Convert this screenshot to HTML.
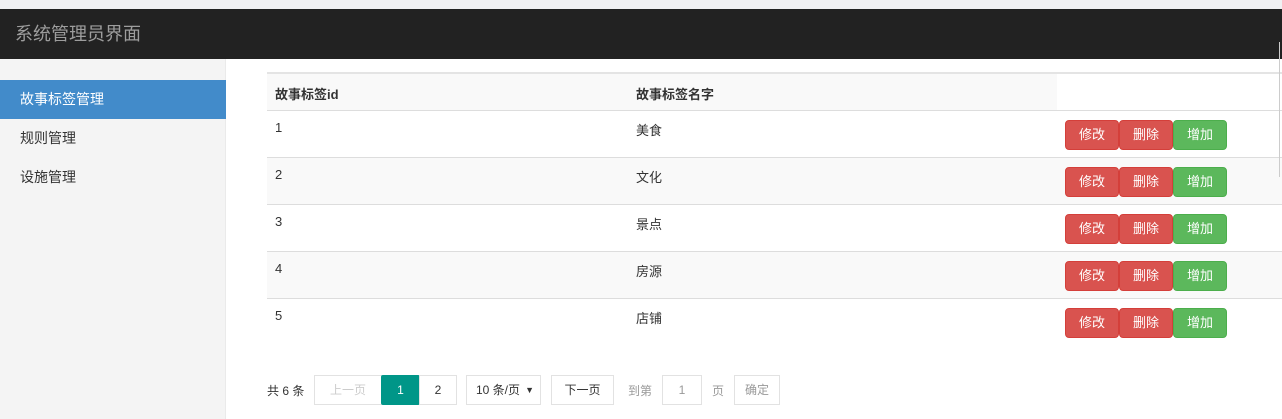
<!DOCTYPE html><html><head><meta charset="utf-8"><style>
*{box-sizing:border-box;margin:0;padding:0}
body{width:1282px;height:419px;overflow:hidden;background:#fff;font-family:"Liberation Sans","Noto Sans CJK SC",sans-serif;font-size:13px;color:#333;position:relative}
.top{position:absolute;left:0;top:0;width:1282px;height:9px;background:#f0f1f3}
.hdr{position:absolute;left:0;top:9px;width:1282px;height:50px;background:#222;color:#9d9d9d;font-size:18px;line-height:50px;padding-left:15px}
.side{position:absolute;left:0;top:59px;width:226px;height:360px;background:#f4f4f4;border-right:1px solid #eaeaea}
.side div{position:absolute;left:0;width:226px;height:39px;line-height:39px;padding-left:20px;font-size:14px;color:#333}
.side .a{background:#428bca;color:#fff}
.tbl{position:absolute;left:267px;top:72px;width:1015px}
.row{position:relative;height:47px;border-top:1px solid #ddd}
.row.s{background:#f9f9f9}
.row span{position:absolute;top:9px}
.c1{left:8px}.c2{left:369px}
.hd{height:38px;border-top:2px solid #e4e4e4;background:linear-gradient(90deg,#f9f9f9 790px,#fff 790px);font-weight:bold}
.hd span{top:10px}
.b{position:absolute;top:9px;width:54px;height:30px;border-radius:4px;color:#fff;font-size:13px;text-align:center;line-height:28px;border:1px solid #d43f3a;background:#d9534f}
.g{background:#5cb85c;border-color:#4cae4c}
.pg{position:absolute;top:375px;height:30px;border:1px solid #e2e2e2;line-height:28px;text-align:center;font-size:12px;background:#fff}
</style></head><body>
<div class="top"></div>
<div class="hdr">系统管理员界面</div>
<div class="side"><div class="a" style="top:21px">故事标签管理</div><div style="top:60px">规则管理</div><div style="top:99px">设施管理</div></div>
<div class="tbl">
<div class="row hd"><span class="c1">故事标签id</span><span class="c2">故事标签名字</span></div>
<div class="row"><span class="c1">1</span><span class="c2">美食</span><div class="b" style="left:798px">修改</div><div class="b" style="left:852px">删除</div><div class="b g" style="left:906px">增加</div></div>
<div class="row s"><span class="c1">2</span><span class="c2">文化</span><div class="b" style="left:798px">修改</div><div class="b" style="left:852px">删除</div><div class="b g" style="left:906px">增加</div></div>
<div class="row"><span class="c1">3</span><span class="c2">景点</span><div class="b" style="left:798px">修改</div><div class="b" style="left:852px">删除</div><div class="b g" style="left:906px">增加</div></div>
<div class="row s"><span class="c1">4</span><span class="c2">房源</span><div class="b" style="left:798px">修改</div><div class="b" style="left:852px">删除</div><div class="b g" style="left:906px">增加</div></div>
<div class="row"><span class="c1">5</span><span class="c2">店铺</span><div class="b" style="left:798px">修改</div><div class="b" style="left:852px">删除</div><div class="b g" style="left:906px">增加</div></div>
</div>
<div style="position:absolute;left:267px;top:382px;font-size:12px">共 6 条</div>
<div class="pg" style="left:314px;width:68px;color:#ccc">上一页</div>
<div class="pg" style="left:381px;width:39px;background:#009688;border-color:#009688;color:#fff;border-radius:2px">1</div>
<div class="pg" style="left:419px;width:38px">2</div>
<div class="pg" style="left:466px;width:75px;text-align:left;padding-left:9px">10 条/页 <span style="position:absolute;right:6px;font-size:9px">▼</span></div>
<div class="pg" style="left:551px;width:63px">下一页</div>
<div style="position:absolute;left:628px;top:382px;font-size:12px;color:#999">到第</div>
<div class="pg" style="left:662px;width:40px;color:#999">1</div>
<div style="position:absolute;left:712px;top:382px;font-size:12px;color:#999">页</div>
<div class="pg" style="left:734px;width:46px;color:#999">确定</div>
<div style="position:absolute;left:1279px;top:42px;width:1px;height:135px;background:#ccc"></div>
</body></html>
